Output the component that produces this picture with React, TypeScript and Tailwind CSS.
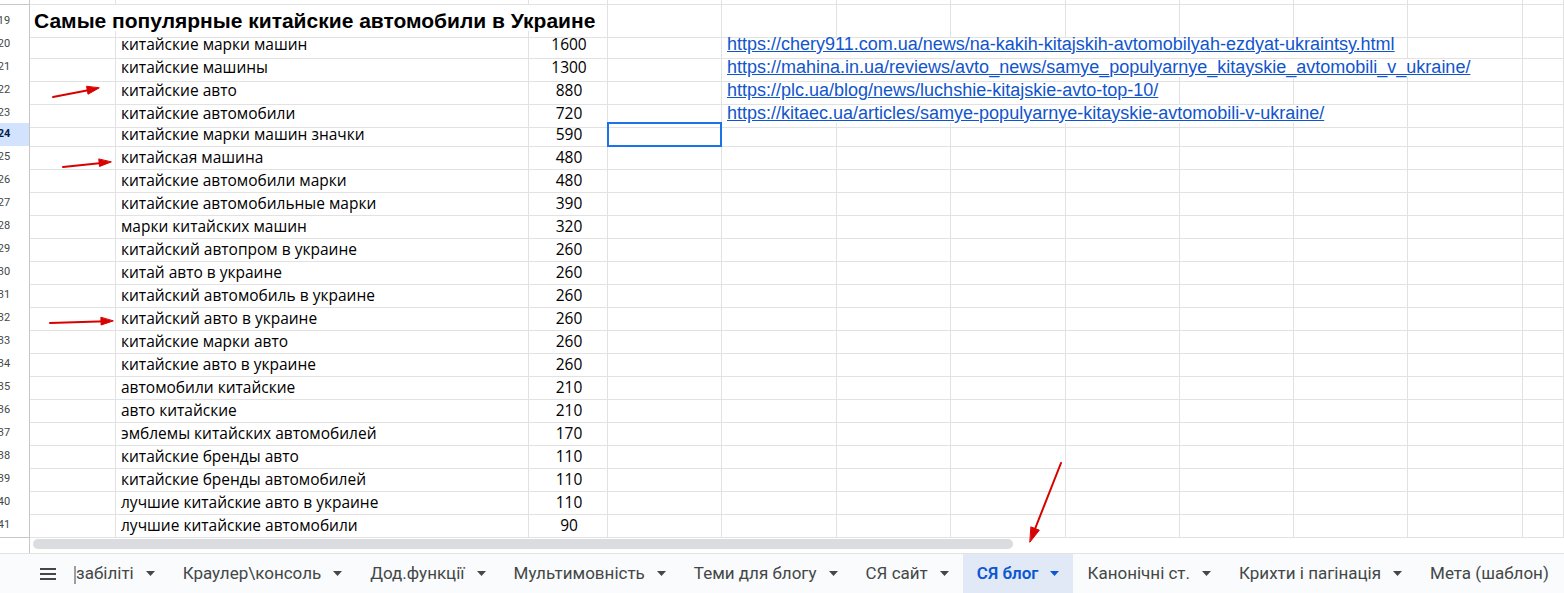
import React from 'react';

const rows: [number, string, string][] = [
  [20, 'китайские марки машин', '1600'],
  [21, 'китайские машины', '1300'],
  [22, 'китайские авто', '880'],
  [23, 'китайские автомобили', '720'],
  [24, 'китайские марки машин значки', '590'],
  [25, 'китайская машина', '480'],
  [26, 'китайские автомобили марки', '480'],
  [27, 'китайские автомобильные марки', '390'],
  [28, 'марки китайских машин', '320'],
  [29, 'китайский автопром в украине', '260'],
  [30, 'китай авто в украине', '260'],
  [31, 'китайский автомобиль в украине', '260'],
  [32, 'китайский авто в украине', '260'],
  [33, 'китайские марки авто', '260'],
  [34, 'китайские авто в украине', '260'],
  [35, 'автомобили китайские', '210'],
  [36, 'авто китайские', '210'],
  [37, 'эмблемы китайских автомобилей', '170'],
  [38, 'китайские бренды авто', '110'],
  [39, 'китайские бренды автомобилей', '110'],
  [40, 'лучшие китайские авто в украине', '110'],
  [41, 'лучшие китайские автомобили', '90'],
];

// link text overflows over the columns it spans (E..)
const links: Record<number, { url: string; span: number }> = {
  20: { url: 'https://chery911.com.ua/news/na-kakih-kitajskih-avtomobilyah-ezdyat-ukraintsy.html', span: 6 },
  21: { url: 'https://mahina.in.ua/reviews/avto_news/samye_populyarnye_kitayskie_avtomobili_v_ukraine/', span: 7 },
  22: { url: 'https://plc.ua/blog/news/luchshie-kitajskie-avto-top-10/', span: 4 },
  23: { url: 'https://kitaec.ua/articles/samye-populyarnye-kitayskie-avtomobili-v-ukraine/', span: 6 },
};

const tabs = [
  'забіліті',
  'Краулер\\консоль',
  'Дод.функції',
  'Мультимовність',
  'Теми для блогу',
  'СЯ сайт',
  'СЯ блог',
  'Канонічні ст.',
  'Крихти і пагінація',
  'Мета (шаблон)',
];

const cell = 'border-r border-b border-[#e2e2e2]';
const gridCols =
  'grid grid-cols-[30px_86px_413px_79px_114px_115px_114px_115px_114px_114px_114px_115px_1fr]';

function RowHeader({ n, active }: { n?: number; active?: boolean }) {
  return (
    <div
      className={`overflow-hidden border-r border-b border-[#c7c7c7] flex items-center ${
        active ? 'bg-[#d3e3fd]' : 'bg-white'
      }`}
    >
      <div
        className={`-ml-[19px] w-[46px] shrink-0 text-center text-[11px] font-['Roboto',sans-serif] ${
          active ? 'font-bold text-[#041e49]' : 'text-[#444746]'
        }`}
      >
        {n}
      </div>
    </div>
  );
}

function EmptyCells({ count }: { count: number }) {
  return (
    <>
      {Array.from({ length: count }).map((_, i) => (
        <div key={i} className={cell} />
      ))}
    </>
  );
}

function Caret({ active }: { active?: boolean }) {
  return (
    <svg width="9" height="5" viewBox="0 0 9 5" className="shrink-0">
      <path d="M0 0h9L4.5 5z" fill={active ? '#0b57d0' : '#444746'} />
    </svg>
  );
}

function Arrows() {
  return (
    <svg className="absolute inset-0 pointer-events-none" width="1564" height="593">
      <g stroke="#d90000" strokeWidth="2" fill="#d90000" strokeLinecap="round">
        <line x1="53" y1="97" x2="92" y2="89.4" />
        <polygon points="99,88 88,94.2 86.6,86.6" strokeWidth="1" />
        <line x1="63" y1="167" x2="104" y2="162.7" />
        <polygon points="111,162 99.5,166.5 98.8,159.3" strokeWidth="1" />
        <line x1="50" y1="323" x2="106" y2="321.2" />
        <polygon points="113,321 101.1,325 100.9,317.6" strokeWidth="1" />
        <line x1="1061" y1="463" x2="1033" y2="534" />
        <polygon points="1030,542 1039.3,530.2 1031.2,527" strokeWidth="1" />
      </g>
    </svg>
  );
}

export default function App() {
  return (
    <div className="relative w-[1564px] h-[593px] overflow-hidden bg-white font-['Open_Sans',sans-serif]">
      <div className="h-[553px] flex flex-col">
        {/* row 18, mostly scrolled out */}
        <div className={`${gridCols} h-[5px]`}>
          <RowHeader />
          <EmptyCells count={12} />
        </div>
        {/* row 19 title */}
        <div className={`${gridCols} h-[26px]`}>
          <RowHeader n={19} />
          <div className={`${cell} col-span-3 flex items-center pl-[4px] overflow-visible whitespace-nowrap font-['Liberation_Sans',Arial,sans-serif] font-bold text-[21px] text-black`}>
            Самые популярные китайские автомобили в Украине
          </div>
          <EmptyCells count={9} />
        </div>
        {rows.map(([n, kw, vol]) => {
          const link = links[n];
          return (
            <div key={n} className={`${gridCols} h-[23px]`}>
              <RowHeader n={n} active={n === 24} />
              <div className={cell} />
              <div className={`${cell} flex items-center pl-[5px] text-[15.5px] text-black whitespace-nowrap`}>
                {kw}
              </div>
              <div className={`${cell} flex items-center justify-center pl-[2px] text-[15.5px] text-black`}>
                {vol}
              </div>
              {n === 24 ? (
                <div className="border-b border-r border-[#e2e2e2] relative">
                  <div className="absolute -inset-x-[1px] -top-[1px] -bottom-[1px] border-2 border-[#1a73e8]" />
                </div>
              ) : (
                <div className={cell} />
              )}
              {link ? (
                <>
                  <div
                    className={`${cell} flex items-center pl-[5px] whitespace-nowrap overflow-visible`}
                    style={{ gridColumn: `span ${link.span} / span ${link.span}` }}
                  >
                    <a
                      href="#"
                      className="font-['Liberation_Sans',Arial,sans-serif] text-[18px] text-[#1155cc] underline"
                    >
                      {link.url}
                    </a>
                  </div>
                  <EmptyCells count={8 - link.span} />
                </>
              ) : (
                <EmptyCells count={8} />
              )}
            </div>
          );
        })}
        <div className="flex-1 flex">
          <div className="w-[30px] border-r border-[#c7c7c7]" />
          <div className="flex-1 pt-[2px] pl-[3px]">
            <div className="w-[980px] h-[10px] rounded-full bg-[#dadce0]" />
          </div>
        </div>
      </div>

      {/* sheet tabs */}
      <div className="h-[40px] flex items-stretch bg-[#f9fbfd] border-t border-[#e1e3e1] font-['Roboto',sans-serif] text-[17px] text-[#444746]">
        <div className="w-[74px] shrink-0 flex items-center pl-[40px]">
          <svg width="16" height="12" viewBox="0 0 16 12">
            <path d="M0 1h16M0 6h16M0 11h16" stroke="#444746" strokeWidth="1.8" />
          </svg>
        </div>
        <div className="flex-1 flex items-stretch overflow-hidden relative">
          <div className="absolute left-0 top-[12px] h-[18px] w-[2px] bg-[#9aa0a6]" />
          {tabs.map((t, i) => {
            const active = t === 'СЯ блог';
            return (
              <div
                key={t}
                className={`flex items-center gap-[12px] shrink-0 whitespace-nowrap ${
                  i === 0 ? 'pl-[2px]' : 'pl-[14px]'
                } pr-[14px] ${active ? 'bg-[#e1e9f7] text-[#0b57d0] font-semibold' : ''}`}
              >
                <span>{t}</span>
                {i < tabs.length - 1 && <Caret active={active} />}
              </div>
            );
          })}
        </div>
      </div>

      <Arrows />
    </div>
  );
}
